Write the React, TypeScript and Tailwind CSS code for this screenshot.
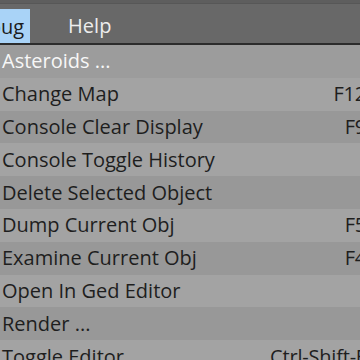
import React from 'react';

const items: { label: string; shortcut?: string; active?: boolean }[] = [
  { label: 'Asteroids ...', active: true },
  { label: 'Change Map', shortcut: 'F12' },
  { label: 'Console Clear Display', shortcut: 'F9' },
  { label: 'Console Toggle History' },
  { label: 'Delete Selected Object' },
  { label: 'Dump Current Obj', shortcut: 'F5' },
  { label: 'Examine Current Obj', shortcut: 'F4' },
  { label: 'Open In Ged Editor' },
  { label: 'Render ...' },
  { label: 'Toggle Editor', shortcut: 'Ctrl-Shift-F' },
];

export default function App() {
  return (
    <div className="w-[360px] h-[360px] overflow-hidden bg-[#9d9d9d] font-['Open_Sans',sans-serif] text-[20px]">
      <div className="w-[380px]">
        {/* menubar */}
        <div className="h-[4px] bg-[#5e5e5e] border-b border-[#575757]" />
        <div className="h-[39px] bg-[#686868] flex items-end">
          <div className="h-[34px] bg-[#a9d3f7] text-[#1c1c1c] pl-[6px] pr-[6px] -ml-[43px] flex items-center leading-none pt-[2px]">
            Debug
          </div>
          <div className="h-[34px] ml-[38px] text-[#ededed] flex items-center leading-none">Help</div>
        </div>
        <div className="h-[2px] bg-[#2c2c2c]" />

        {/* dropdown */}
        <div>
          {items.map((item, i) => (
            <div
              key={item.label}
              className={`h-[32.8px] flex items-center justify-between pl-[2px] pr-[14px] whitespace-nowrap leading-none ${
                item.active
                  ? 'bg-[#9c9c9c] text-[#f7f7f7]'
                  : i % 2 === 1
                  ? 'bg-[#a3a3a3] text-[#1e1e1e]'
                  : 'bg-[#989898] text-[#1e1e1e]'
              }`}
            >
              <span>{item.label}</span>
              {item.shortcut && <span className="tracking-[-0.2px]">{item.shortcut}</span>}
            </div>
          ))}
        </div>
      </div>
    </div>
  );
}
